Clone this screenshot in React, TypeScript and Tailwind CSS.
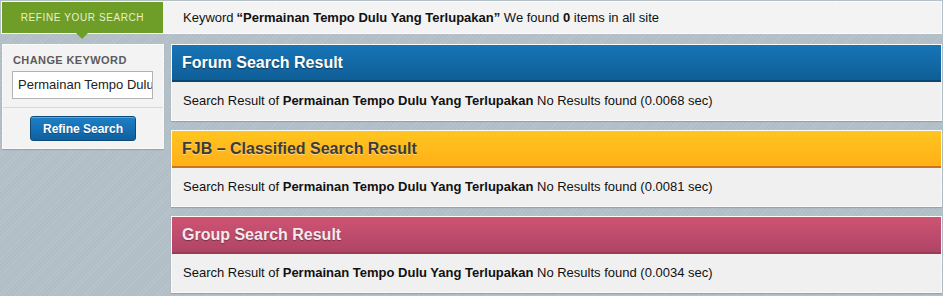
const term = 'Permainan Tempo Dulu Yang Terlupakan';

const results = [
  {
    title: 'Forum Search Result',
    head: 'bg-[linear-gradient(#1775b7,#0f5e96)] text-white [text-shadow:0_1px_1px_rgba(0,0,0,0.45)]',
    line: 'border-b-2 border-[#0c4670]',
    time: '0.0068',
    gap: '',
  },
  {
    title: 'FJB – Classified Search Result',
    head: 'bg-[linear-gradient(#ffc520,#ffb018)] text-[#3b3b3b] [text-shadow:0_1px_0_rgba(255,255,255,0.45)]',
    line: 'border-b-2 border-[#cc741b]',
    time: '0.0081',
    gap: ' ',
  },
  {
    title: 'Group Search Result',
    head: 'bg-[linear-gradient(#cf5373,#ae4566)] text-[#f6e9ec] [text-shadow:0_1px_1px_rgba(0,0,0,0.35)]',
    line: 'border-b-2 border-[#9c3a58]',
    time: '0.0034',
    gap: '',
  },
];

export default function App() {
  return (
    <div
      className="w-[943px] h-[296px] overflow-hidden bg-[#b5c1c9] bg-[repeating-linear-gradient(135deg,#b8c4cc_0px,#b8c4cc_1px,#b2bec6_1px,#b2bec6_3px)] pt-[1px] px-[1px] text-[13px] text-[#111] font-['Liberation_Sans',Arial,sans-serif]"
    >
      {/* top bar */}
      <div className="relative flex h-[33px] border border-[#fafafa] bg-[#f3f3f3]">
        <div className="relative w-[161px] h-full bg-[#6e9e27] flex items-center justify-center text-[10px] tracking-[0.6px] text-[#e9f0cf]">
          REFINE YOUR SEARCH
          <span className="absolute left-[74px] -bottom-[6px] w-0 h-0 border-x-[6px] border-x-transparent border-t-[6px] border-t-[#6e9e27]" />
        </div>
        <div className="flex items-center pl-[20px]">
          Keyword <b className="ml-[3px]">“{term}”</b>&nbsp;We found&nbsp;<b>0</b>&nbsp;items in all site
        </div>
      </div>

      <div className="flex gap-[7px] mt-[10px] pl-[1px]">
        {/* sidebar */}
        <div className="w-[162px] h-[105px] shrink-0 border border-[#fafafa] bg-[#f3f3f3] shadow-[0_1px_1px_rgba(0,0,0,0.15)] flex flex-col">
          <div className="px-[10px] pt-[8px] text-[11px] font-bold tracking-[0.4px] text-[#5b5b5b] leading-[14px]">
            CHANGE KEYWORD
          </div>
          <div className="px-[9px] pt-[4px]">
            <div className="h-[28px] w-[141px] border border-[#b3b3b3] bg-white overflow-hidden whitespace-nowrap flex items-center pl-[5px] text-[13px] text-[#222]">
              Permainan Tempo Dulu Yang Terlupakan
            </div>
          </div>
          <div className="mt-[8px] border-t border-[#d8d8d8] flex justify-center pt-[8px]">
            <div className="w-[106px] h-[25px] rounded-[3px] border border-[#0d4a78] bg-[linear-gradient(#1d80c8,#0f609f)] shadow-[inset_0_1px_0_rgba(255,255,255,0.3)] flex items-center justify-center text-[12px] font-bold text-white [text-shadow:0_1px_0_rgba(0,0,0,0.3)]">
              Refine Search
            </div>
          </div>
        </div>

        {/* results */}
        <div className="flex-1 flex flex-col gap-[9px]">
          {results.map((r) => (
            <div key={r.title} className="h-[77px] border border-[#fafafa] bg-[#f0f0f0] shadow-[0_1px_1px_rgba(0,0,0,0.15)]">
              <div className={`h-[37px] flex items-center pl-[10px] text-[16px] font-bold ${r.head} ${r.line}`}>
                {r.title}
              </div>
              <div className="h-[37px] flex items-center pl-[11px] whitespace-pre">
                Search Result of <b>{term}</b>{r.gap} No Results found ({r.time} sec)
              </div>
            </div>
          ))}
        </div>
      </div>
    </div>
  );
}
